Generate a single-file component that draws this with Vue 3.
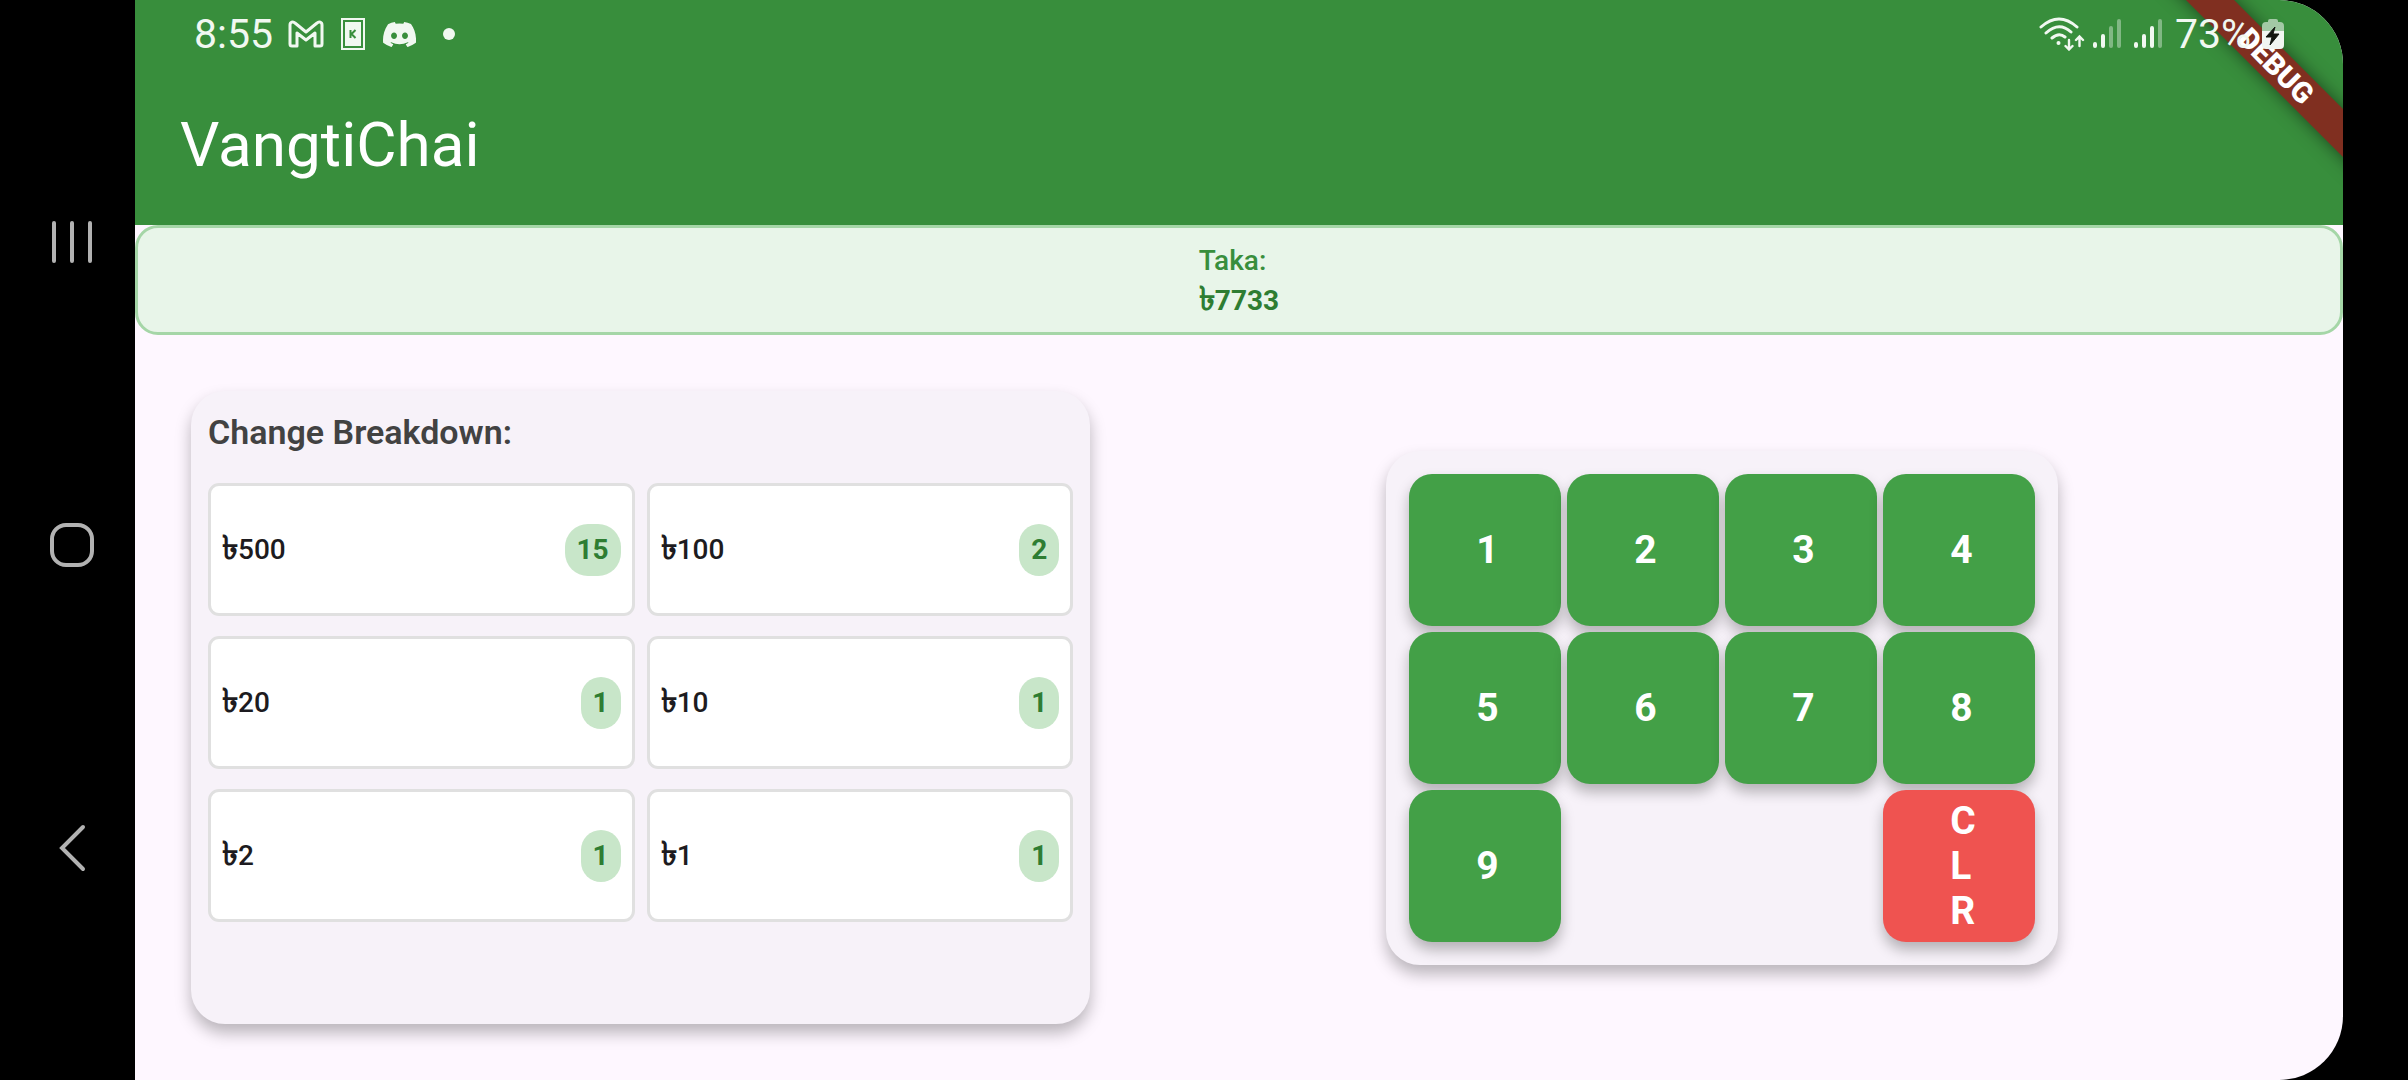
<script setup>
import { ref } from 'vue'

const amount = ref(7733)
const notes = [
  { value: 500, count: 15 },
  { value: 100, count: 2 },
  { value: 20, count: 1 },
  { value: 10, count: 1 },
  { value: 2, count: 1 },
  { value: 1, count: 1 },
]
const digits = [1, 2, 3, 4, 5, 6, 7, 8, 9]
</script>

<template>
  <div class="device">
    <nav class="sysnav">
      <button type="button" aria-label="Recent apps">
        <svg width="44" height="44" viewBox="0 0 44 44"><path d="M4 3v38M22 3v38M40 3v38" /></svg>
      </button>
      <button type="button" aria-label="Home">
        <svg width="44" height="44" viewBox="0 0 44 44"><rect x="2" y="2" width="40" height="40" rx="14" /></svg>
      </button>
      <button type="button" aria-label="Back">
        <svg width="44" height="44" viewBox="0 0 44 44"><path d="M33 1 12 22l21 21" /></svg>
      </button>
    </nav>

    <div class="screen">
      <header class="appbar">
        <div class="status">
          <div class="status-left">
            <span>8:55</span>
            <svg class="gmail" width="36" height="28" viewBox="0 0 36 28">
              <path d="M2 24V5c0-3 3-4 5-2l11 9 11-9c2-2 5-1 5 2v19q0 2-2 2h-5V13l-9 7-9-7v13H4q-2 0-2-2Z" fill="none" stroke="currentColor" stroke-width="3" stroke-linejoin="round" />
            </svg>
            <svg class="card" width="24" height="32" viewBox="0 0 24 32">
              <rect x="1" y="1" width="22" height="30" fill="none" stroke="currentColor" stroke-width="2" />
              <rect x="4" y="4" width="16" height="24" fill="currentColor" />
              <path d="M9.500 12v8M14.500 12l-4 4 4 4" fill="none" stroke="#388e3c" stroke-width="2" />
            </svg>
            <svg class="discord" width="33" height="25" viewBox="0 0 127 96">
              <path fill="currentColor" d="M107.700 8.070A105.150 105.150 0 0 0 81.470 0a72.060 72.060 0 0 0-3.360 6.830 97.680 97.680 0 0 0-29.110 0A72.370 72.370 0 0 0 45.640 0a105.890 105.890 0 0 0-26.250 8.090C2.790 32.650-1.710 56.600.540 80.210a105.730 105.730 0 0 0 32.170 16.150 77.700 77.700 0 0 0 6.890-11.110 68.420 68.420 0 0 1-10.850-5.180c.910-.660 1.800-1.340 2.660-2a75.570 75.570 0 0 0 64.320 0c.870.710 1.760 1.390 2.660 2a68.680 68.680 0 0 1-10.870 5.190 77 77 0 0 0 6.890 11.100 105.250 105.250 0 0 0 32.190-16.140c2.640-27.380-4.510-51.110-18.900-72.150ZM42.450 65.690C36.180 65.690 31 60 31 53s5-12.740 11.430-12.740S54 46 53.890 53s-5.050 12.690-11.440 12.690Zm42.240 0C78.410 65.690 73.250 60 73.250 53s5-12.740 11.440-12.740S96.230 46 96.120 53s-5.040 12.690-11.430 12.690Z" />
            </svg>
            <i class="dot"></i>
          </div>
          <div class="status-right">
            <svg width="46" height="34" viewBox="0 0 46 34" fill="none" stroke="currentColor" stroke-width="3" stroke-linecap="round">
              <path d="M2 10q18-16 36 0M7 16q13-12 25-1M13 21q7-6 13-1" />
              <circle cx="19.500" cy="26" r="2" fill="currentColor" stroke="none" />
              <path d="M30 23v9M26.500 29l3.500 3.500 3.500-3.500M40.500 29v-9M37 23l3.500-3.500L44 23" stroke-width="2.400" />
            </svg>
            <svg width="28" height="30" viewBox="0 0 28 30" fill="none" stroke="currentColor" stroke-width="4" stroke-linecap="round">
              <path d="M2 25v2M10 17v10" />
              <path d="M18 9v18M26 2v25" opacity=".4" />
            </svg>
            <svg class="sim2" width="28" height="30" viewBox="0 0 28 30" fill="none" stroke="currentColor" stroke-width="4" stroke-linecap="round">
              <path d="M2 25v2M10 17v10M18 9v18" />
              <path d="M26 2v25" opacity=".4" />
            </svg>
            <span>73%</span>
            <svg class="battery" width="22" height="32" viewBox="0 0 22 32">
              <path d="M6 4V3q0-2 2-2h6q2 0 2 2v1h2q4 0 4 4v5H0V8q0-4 4-4Z" fill="#a3c9a5" />
              <path d="M0 13h22v14q0 4-4 4H4q-4 0-4-4Z" fill="#f1f6f1" />
              <path d="M13 9 4 19h6l-2 8 9-11h-6Z" fill="#12160f" stroke="#12160f" stroke-linejoin="round" />
            </svg>
          </div>
        </div>
        <h1>VangtiChai</h1>
        <div class="banner"><span>DEBUG</span></div>
      </header>

      <section class="total">
        <div>
          <div class="total-label">Taka:</div>
          <div class="total-value"><span class="sign">৳</span>{{ amount }}</div>
        </div>
      </section>

      <main class="content">
        <section class="panel breakdown">
          <h2>Change Breakdown:</h2>
          <ul>
            <li v-for="n in notes" :key="n.value">
              <span class="note"><span class="sign">৳</span>{{ n.value }}</span>
              <span class="count">{{ n.count }}</span>
            </li>
          </ul>
        </section>

        <section class="pad-area">
          <div class="panel pad">
            <button v-for="d in digits" :key="d" type="button" class="key"><span>{{ d }}</span></button>
            <button type="button" class="key clear"><span>CLR</span></button>
          </div>
        </section>
      </main>
    </div>
  </div>
</template>

<style>
body {
  margin: 0;
  background: #000;
}
</style>

<style scoped>
.device {
  display: flex;
  min-height: 100vh;
  box-sizing: border-box;
  padding-right: 65px;
  background: #000;
  font-family: Roboto, "Noto Sans", sans-serif;
  font-size: 28px;
  line-height: 40px;
}

button {
  border: 0;
  font: inherit;
  cursor: pointer;
}

.sysnav {
  flex: none;
  width: 135px;
  box-sizing: border-box;
  padding: 91px 0 81px 9px;
  display: flex;
  flex-direction: column;
  align-items: center;
  justify-content: space-around;
}

.sysnav button {
  display: flex;
  padding: 0;
  background: none;
}

.sysnav svg {
  overflow: visible;
  fill: none;
  stroke: #b2b2b2;
  stroke-width: 4;
  stroke-linecap: round;
}

.screen {
  flex: 1;
  min-width: 0;
  display: flex;
  flex-direction: column;
  overflow: hidden;
  border-radius: 0 64px 64px 0;
  background: #fef7ff;
}

.appbar {
  position: relative;
  overflow: hidden;
  background: #388e3c;
  color: #fff;
}

.status {
  position: relative;
  z-index: 1;
  display: flex;
  justify-content: space-between;
  height: 68px;
  padding: 0 59px;
  font-size: 41px;
  color: #f1f8f1;
}

.status-left,
.status-right {
  display: flex;
  align-items: center;
  height: 68px;
}

.gmail {
  margin-left: 15px;
}

.card {
  margin-left: 17px;
}

.discord {
  margin-left: 18px;
}

.dot {
  width: 12px;
  height: 12px;
  margin-left: 27px;
  border-radius: 50%;
  background: currentColor;
}

.status-right {
  gap: 8px;
}

.sim2 {
  margin: 0 5px;
}

.battery {
  margin-left: 3px;
}

h1 {
  margin: 0;
  padding: 41px 45px 44px;
  font-size: 62px;
  line-height: 72px;
  font-weight: 400;
}

.banner {
  position: absolute;
  top: 49px;
  right: -83px;
  width: 300px;
  height: 34px;
  transform: rotate(45deg);
  background: #802f20;
  box-shadow: 0 0 17px rgba(0, 0, 0, 0.5);
  font-size: 29px;
  line-height: 34px;
  font-weight: 900;
  text-align: center;
}

.total {
  display: flex;
  justify-content: center;
  padding: 13px 12px 11px;
  border: 3px solid #a5d6a7;
  border-radius: 23px;
  background: #e8f5e9;
}

.total-label {
  color: #388e3c;
  font-weight: 500;
}

.total-value {
  height: 40px;
  color: #2e7d32;
  font-weight: 700;
}

.sign {
  font-size: 33px;
  font-weight: 700;
  line-height: 20px;
}

.content {
  flex: 1;
  display: grid;
  grid-template-columns: minmax(0, 4fr) minmax(0, 5fr);
  gap: 45px;
  padding: 45px;
}

.panel {
  border-radius: 34px;
  background: #f7f2f9;
  box-shadow: 0 9px 16px rgba(0, 0, 0, 0.27);
}

.breakdown {
  margin: 11px;
  padding: 17px;
}

h2 {
  margin: 0 0 27px;
  font-size: 34px;
  line-height: 48px;
  font-weight: 600;
  color: #424242;
}

ul {
  display: grid;
  grid-template-columns: 1fr 1fr;
  gap: 20px 12px;
  margin: 0;
  padding: 0;
  list-style: none;
}

li {
  display: flex;
  align-items: center;
  justify-content: space-between;
  height: 133px;
  box-sizing: border-box;
  padding: 0 11px;
  border: 3px solid #e0e0e0;
  border-radius: 11px;
  background: #fff;
}

.note {
  color: #1d1b20;
  font-weight: 500;
}

.count {
  padding: 6px 12px;
  border-radius: 23px;
  background: #c8e6c9;
  color: #2e7d32;
  font-weight: 700;
}

.pad-area {
  display: flex;
  align-items: center;
  justify-content: center;
}

.pad {
  display: grid;
  grid-template-columns: repeat(4, 152px);
  grid-auto-rows: 152px;
  gap: 6px;
  padding: 23px;
}

.key {
  padding: 1px 67px 0;
  border-radius: 23px;
  background: #43a047;
  box-shadow: 0 8px 14px rgba(0, 0, 0, 0.27);
  color: #fff;
  font-size: 39px;
  line-height: 45px;
  font-weight: 700;
  text-align: left;
}

.key span {
  display: block;
  overflow-wrap: anywhere;
}

.clear {
  grid-column: 4;
  background: #ef5350;
}
</style>
